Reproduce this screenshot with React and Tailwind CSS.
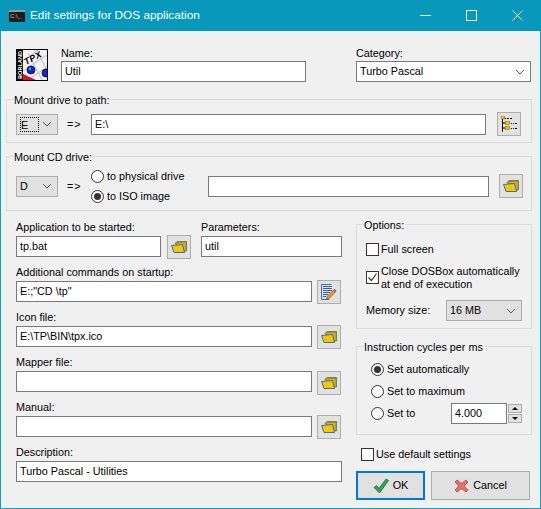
import { useState } from 'react';

const font = { fontFamily: '"Liberation Sans", Arial, sans-serif' };

function Label({ children, className = '' }) {
  return <div className={`h-[15px] leading-[15px] whitespace-nowrap ${className}`}>{children}</div>;
}

function TextBox({ value = '', className = '' }) {
  return (
    <div className={`h-[21px] bg-white border border-[#7a7a7a] px-[3px] leading-[19px] whitespace-nowrap overflow-hidden ${className}`}>
      {value}
    </div>
  );
}

function Combo({ value, focused, white, className = '' }) {
  return (
    <div className={`h-[21px] flex items-center justify-between pl-[3px] pr-[5px] border ${white ? 'bg-white border-[#7a7a7a]' : 'bg-[#e1e1e1] border-[#adadad]'} ${className}`}>
      <span className={focused ? 'h-[15px] w-[19px] leading-[14px] border border-dotted border-black' : 'leading-[19px]'}>{value}</span>
      <svg width="10" height="6" viewBox="0 0 10 6" fill="none" stroke="#5f5f5f" strokeWidth="1">
        <path d="M1 1l4 4 4-4" />
      </svg>
    </div>
  );
}

function FolderIcon() {
  return (
    <svg width="16" height="14" viewBox="0 0 16 14">
      <path d="M4 3.500 6 1.500h9.500V11H13z" fill="#a38f2e" stroke="#7f7a50" />
      <path d="M6 3h8.500v7H8z" fill="#c9b03a" />
      <path d="M.5 5.500 11.500 4.500 13.500 12.500H3z" fill="#f3c800" stroke="#3a6fb0" />
    </svg>
  );
}

function TreeIcon() {
  return (
    <svg width="16" height="16" viewBox="0 0 16 16">
      <path d="M1.500 2v14M1.500 7h3M1.500 12h3" stroke="#000" fill="none" />
      <path d="M4 2.500h1M6 2.500h2M9 2.500h2M10 7.500h1M12 7.500h1M14 7.500h2M10 12.500h1M12 12.500h1M14 12.500h2" stroke="#000" fill="none" />
      <rect x="0" y="0" width="3.500" height="3" fill="#f5c400" stroke="#8a6b00" strokeWidth="0.6" />
      <rect x="4.500" y="5.500" width="4" height="3" fill="#f5c400" stroke="#8a6b00" strokeWidth="0.6" />
      <rect x="4.500" y="10.500" width="4" height="3" fill="#f5c400" stroke="#8a6b00" strokeWidth="0.6" />
    </svg>
  );
}

function EditIcon() {
  return (
    <svg width="16" height="16" viewBox="0 0 16 16">
      <path d="M.5.500h10M.5.500v15h8" fill="none" stroke="#3f6fb5" />
      <path d="M2 2.500h9M2 4.500h9M2 6.500h9M2 8.500h7M2 10.500h5M2 12.500h3" stroke="#2f62ad" fill="none" />
      <path d="M5 15.500 6.500 12l6-6 2 2-6 6z" fill="#f09a1a" stroke="#6d4a10" strokeWidth="0.6" />
      <path d="M12.500 6l1-1 2 2-1 1z" fill="#d8352a" />
    </svg>
  );
}

function IconButton({ icon, className = '' }) {
  return (
    <div className={`w-[24px] h-[24px] shrink-0 flex items-center justify-center bg-[#e1e1e1] border border-[#adadad] ${className}`}>
      {icon === 'tree' ? <TreeIcon /> : icon === 'edit' ? <EditIcon /> : <FolderIcon />}
    </div>
  );
}

function Group({ title, className = '', children }) {
  return (
    <div className={`relative border border-[#dcdcdc] ${className}`}>
      <span className="absolute left-[7px] top-[-7px] h-[15px] leading-[15px] bg-[#f0f0f0] pr-px whitespace-nowrap">{title}</span>
      {children}
    </div>
  );
}

function Radio({ checked, label, className = '' }) {
  return (
    <div className={`flex items-center h-[20px] ${className}`}>
      <span className="w-[13px] h-[13px] rounded-full bg-white border border-[#333] flex items-center justify-center mr-[3px]">
        {checked && <span className="w-[7px] h-[7px] rounded-full bg-[#333]" />}
      </span>
      <span className="whitespace-nowrap">{label}</span>
    </div>
  );
}

function Check({ checked, children, className = '' }) {
  return (
    <div className={`flex items-center ${className}`}>
      <span className="w-[13px] h-[13px] shrink-0 bg-white border border-[#333] mr-[2px] flex items-center justify-center">
        {checked && (
          <svg width="11" height="11" viewBox="0 0 11 11" fill="none" stroke="#333" strokeWidth="1.2">
            <path d="M1.500 5.500l3 3 5-7" />
          </svg>
        )}
      </span>
      <span className="leading-[13px] whitespace-nowrap">{children}</span>
    </div>
  );
}

function AppLogo() {
  return (
    <svg width="32" height="32" viewBox="0 0 32 32" className="shrink-0 mt-[3px]">
      <rect width="32" height="32" fill="#000" />
      <rect x="7" y="1" width="24" height="30" fill="#f2f2f2" />
      <path d="M7 12 22 1M7 22 31 6M12 31 31 18M12 4l14 27M20 1l11 20" stroke="#bdbdbd" fill="none" />
      <path d="M7 25l13 6H7z" fill="#cc1144" />
      <text x="0" y="0" transform="translate(5.500 30) rotate(-90)" fill="#fff" fontSize="6" fontWeight="700" fontFamily="Liberation Sans" textLength="28" lengthAdjust="spacingAndGlyphs">BORLAND</text>
      <text x="0" y="0" transform="translate(10 16) rotate(-28)" fill="#000" fontSize="9" fontWeight="700" fontStyle="italic" fontFamily="Liberation Sans" letterSpacing="0.500">TPX</text>
      <circle cx="15" cy="21" r="4" fill="#1226d8" stroke="#000" strokeWidth="0.7" />
      <circle cx="14" cy="19.800" r="1.200" fill="#22c0e8" />
      <circle cx="30" cy="24" r="4" fill="#1226d8" stroke="#000" strokeWidth="0.7" />
      <rect x="31" y="0" width="1" height="32" fill="#000" />
    </svg>
  );
}

function TitleBar() {
  return (
    <div className="h-[31px] shrink-0 bg-[#0798bb] flex items-center text-white">
      <div className="ml-[9px] mr-[5px] w-[16px] h-[12px] bg-[#1c1c1c] overflow-hidden">
        <div className="h-[2px] bg-[#9a9a9a]" />
        <div className="text-[6px] leading-[8px] pl-px text-[#c8c8c8]">C:\_</div>
      </div>
      <span className="text-[11.8px]">Edit settings for DOS application</span>
      <div className="ml-auto flex items-center mr-[18px] gap-[35px]">
        <svg width="11" height="11" viewBox="0 0 11 11" stroke="#fff" fill="none"><path d="M0 5.500h11" /></svg>
        <svg width="11" height="11" viewBox="0 0 11 11" stroke="#fff" fill="none"><rect x="0.500" y="0.500" width="10" height="10" /></svg>
        <svg width="11" height="11" viewBox="0 0 11 11" stroke="#fff" fill="none"><path d="M.5.500l10 10M10.500.500l-10 10" /></svg>
      </div>
    </div>
  );
}

function FileField({ label, value, button, width = 'w-[296px]', buttonClass = '' }) {
  return (
    <div>
      <Label>{label}</Label>
      <div className="flex items-start h-[24px]">
        <TextBox value={value} className={`${width} mt-px`} />
        <IconButton icon={button} className={`ml-[5px] ${buttonClass}`} />
      </div>
    </div>
  );
}

export default function App() {
  const [name] = useState('Util');

  return (
    <div className="w-[541px] h-[509px] flex flex-col overflow-hidden bg-[#f0f0f0] text-black text-[10.8px]" style={font}>
      <TitleBar />
      <div className="flex-1 border-x border-b border-[#0aa3c6] pl-[5px] pr-[8px] pt-[15px]">
        {/* name + category */}
        <div className="flex items-start h-[36px]">
          <div className="ml-[10px]"><AppLogo /></div>
          <div className="ml-[13px] w-[245px]">
            <Label>Name:</Label>
            <TextBox value={name} />
          </div>
          <div className="ml-[50px] w-[175px]">
            <Label>Category:</Label>
            <Combo value="Turbo Pascal" white />
          </div>
        </div>

        <Group title="Mount drive to path:" className="mt-[17px] h-[44px]">
          <div className="flex items-center pl-[9px] pt-[12px]">
            <Combo value="E" focused className="w-[42px]" />
            <span className="ml-[9px] w-[24px] tracking-[1px]">=&gt;</span>
            <TextBox value="E:\" className="w-[395px]" />
            <IconButton icon="tree" className="ml-[11px]" />
          </div>
        </Group>

        <Group title="Mount CD drive:" className="mt-[13px] h-[55px]">
          <div className="flex items-center pl-[9px] pt-[9px]">
            <Combo value="D" className="w-[42px]" />
            <span className="ml-[9px] w-[24px] tracking-[1px]">=&gt;</span>
            <div className="w-[117px]">
              <Radio label="to physical drive" />
              <Radio label="to ISO image" checked />
            </div>
            <TextBox className="w-[281px]" />
            <IconButton className="ml-[10px]" />
          </div>
        </Group>

        <div className="flex items-start mt-[9px]">
          {/* left column */}
          <div className="ml-[10px] w-[326px] flex flex-col gap-[6px]">
            <div className="flex items-start">
              <div>
                <Label>Application to be started:</Label>
                <div className="flex items-start h-[24px]">
                  <TextBox value="tp.bat" className="w-[145px] mt-px" />
                  <IconButton className="ml-[6px]" />
                </div>
              </div>
              <div className="ml-[10px]">
                <Label>Parameters:</Label>
                <TextBox value="util" className="w-[141px] mt-px" />
              </div>
            </div>
            <FileField label="Additional commands on startup:" value={'E:;"CD \\tp"'} button="edit" />
            <FileField label="Icon file:" value="E:\TP\BIN\tpx.ico" />
            <FileField label="Mapper file:" buttonClass="mt-px" />
            <FileField label="Manual:" />
            <div>
              <Label>Description:</Label>
              <TextBox value="Turbo Pascal - Utilities" className="w-[326px] mt-px" />
            </div>
          </div>

          {/* right column */}
          <div className="ml-[14px] w-[176px] pt-[4px]">
            <Group title="Options:" className="h-[105px]">
              <div className="pl-[9px] pt-[18px]">
                <Check>Full screen</Check>
                <Check checked className="mt-[8px]"><span className="relative top-px">Close DOSBox automatically<br />at end of execution</span></Check>
                <div className="flex items-center mt-[10px]">
                  <span className="w-[80px]">Memory size:</span>
                  <Combo value="16 MB" className="w-[76px]" />
                </div>
              </div>
            </Group>

            <Group title="Instruction cycles per ms" className="mt-[17px] h-[89px]">
              <div className="pl-[14px] pt-[11px] flex flex-col">
                <Radio label="Set automatically" checked className="h-[22px]" />
                <Radio label="Set to maximum" className="h-[22px]" />
                <div className="flex items-center h-[22px]">
                  <Radio label="Set to" className="w-[80px]" />
                  <TextBox value="4.000" className="w-[56px]" />
                  <div className="ml-px w-[14px] flex flex-col gap-px">
                    <div className="h-[9px] bg-[#e1e1e1] border border-[#adadad] flex items-center justify-center">
                      <span className="border-x-[3px] border-x-transparent border-b-[3px] border-b-black" />
                    </div>
                    <div className="h-[9px] bg-[#e1e1e1] border border-[#adadad] flex items-center justify-center">
                      <span className="border-x-[3px] border-x-transparent border-t-[3px] border-t-black" />
                    </div>
                  </div>
                </div>
              </div>
            </Group>

            <Check className="mt-[13px] ml-[5px]">Use default settings</Check>

            <div className="flex mt-[10px]">
              <div className="w-[69px] h-[29px] bg-[#e1e1e1] border-2 border-[#0078d7] flex items-center justify-center gap-[4px]">
                <svg width="16" height="16" viewBox="0 0 16 16">
                  <path d="M1 9.500 3.500 7.500 6 10.500 13 1l2.500 1.500L6.500 15z" fill="#2fa84f" stroke="#14703a" strokeWidth="0.8" />
                </svg>
                <span>OK</span>
              </div>
              <div className="ml-[6px] w-[99px] h-[29px] bg-[#e1e1e1] border border-[#adadad] flex items-center justify-center gap-[4px]">
                <svg width="15" height="14" viewBox="0 0 15 14">
                  <path d="M1 3 3 1l4.500 3.500L12 1l2 2-3.800 4 3.800 4-2 2-4.500-3.500L3 13l-2-2 3.800-4z" fill="#ea6f68" stroke="#b8403a" strokeWidth="0.8" />
                </svg>
                <span>Cancel</span>
              </div>
            </div>
          </div>
        </div>
      </div>
    </div>
  );
}
